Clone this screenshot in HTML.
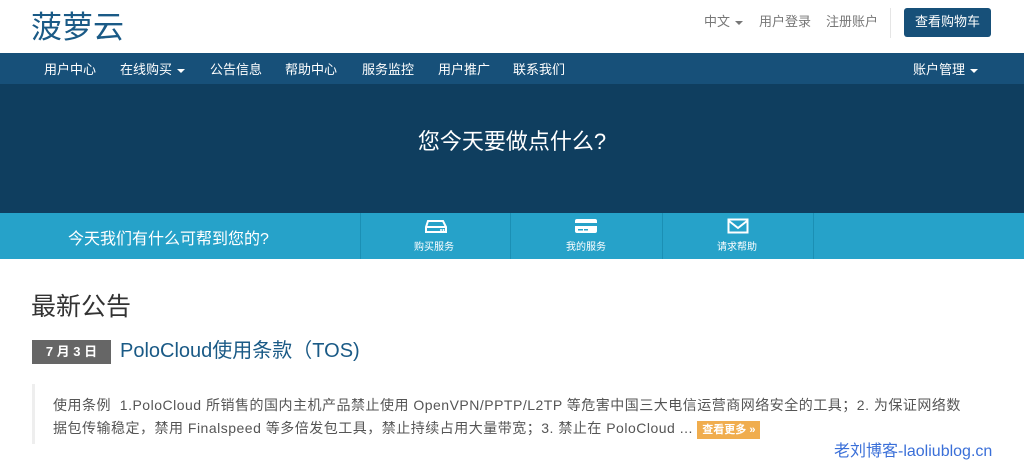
<!DOCTYPE html>
<html><head><meta charset="utf-8"><style>
*{margin:0;padding:0;box-sizing:border-box}
body{width:1024px;height:476px;overflow:hidden;background:#fff;font-family:"Liberation Sans","Noto Sans CJK SC",sans-serif;position:relative}
.abs{position:absolute;white-space:nowrap}
.caret{display:inline-block;border-left:4px solid transparent;border-right:4px solid transparent;border-top:4px solid currentColor;vertical-align:middle;margin-left:5px}
</style></head><body>
<div class="abs" style="left:31px;top:2px;font-size:31px;color:#1a5a86">菠萝云</div>
<div class="abs" style="left:704px;top:11px;font-size:13px;color:#777">中文<span class="caret"></span></div>
<div class="abs" style="left:759px;top:11px;font-size:13px;color:#777">用户登录</div>
<div class="abs" style="left:826px;top:11px;font-size:13px;color:#777">注册账户</div>
<div class="abs" style="left:890px;top:8px;width:1px;height:30px;background:#e5e5e5"></div>
<div class="abs" style="left:904px;top:8px;width:87px;height:29px;background:#175079;border-radius:3px;color:#fff;font-size:13px;line-height:27px;text-align:center">查看购物车</div>
<div class="abs" style="left:0;top:53px;width:1024px;height:32px;background:#175079"></div>
<div class="abs" style="left:0;top:84px;width:1024px;height:129px;background:#0f3e5f"></div>
<div class="abs" style="left:44px;top:59px;font-size:13px;color:#fff">用户中心</div>
<div class="abs" style="left:120px;top:59px;font-size:13px;color:#fff">在线购买<span class="caret"></span></div>
<div class="abs" style="left:210px;top:59px;font-size:13px;color:#fff">公告信息</div>
<div class="abs" style="left:285px;top:59px;font-size:13px;color:#fff">帮助中心</div>
<div class="abs" style="left:362px;top:59px;font-size:13px;color:#fff">服务监控</div>
<div class="abs" style="left:438px;top:59px;font-size:13px;color:#fff">用户推广</div>
<div class="abs" style="left:513px;top:59px;font-size:13px;color:#fff">联系我们</div>
<div class="abs" style="left:913px;top:59px;font-size:13px;color:#fff">账户管理<span class="caret"></span></div>
<div class="abs" style="left:0;top:124px;width:1024px;text-align:center;font-size:22px;color:#fff">您今天要做点什么?</div>
<div class="abs" style="left:0;top:213px;width:1024px;height:46px;background:#26a2c9"></div>
<div class="abs" style="left:68px;top:225px;font-size:16px;color:#fff">今天我们有什么可帮到您的?</div>
<div class="abs" style="left:360px;top:213px;width:1px;height:46px;background:#1b8fb4"></div>
<div class="abs" style="left:510px;top:213px;width:1px;height:46px;background:#1b8fb4"></div>
<div class="abs" style="left:662px;top:213px;width:1px;height:46px;background:#1b8fb4"></div>
<div class="abs" style="left:813px;top:213px;width:1px;height:46px;background:#1b8fb4"></div>
<svg class="abs" style="left:424px;top:218px" width="24" height="16"><path d="M4 3h15l3 6v5H2V9z M2 9h20" fill="none" stroke="#fff" stroke-width="2"/><circle cx="17" cy="12" r="1" fill="#fff"/><circle cx="19.5" cy="12" r="1" fill="#fff"/></svg>
<div class="abs" style="left:414px;top:238px;font-size:10px;color:#fff">购买服务</div>
<svg class="abs" style="left:574px;top:218px" width="24" height="16"><rect x="1" y="1" width="22" height="14" rx="2" fill="#fff"/><rect x="1" y="5" width="22" height="3" fill="#26a2c9"/><rect x="4" y="11" width="5" height="1.5" fill="#26a2c9"/><rect x="10" y="11" width="4" height="1.5" fill="#26a2c9"/></svg>
<div class="abs" style="left:566px;top:238px;font-size:10px;color:#fff">我的服务</div>
<svg class="abs" style="left:727px;top:218px" width="22" height="16"><rect x="1.5" y="1.5" width="19" height="13" fill="none" stroke="#fff" stroke-width="2"/><path d="M2 3l9 7 9-7" fill="none" stroke="#fff" stroke-width="2"/></svg>
<div class="abs" style="left:717px;top:238px;font-size:10px;color:#fff">请求帮助</div>
<div class="abs" style="left:31px;top:287px;font-size:25px;color:#333">最新公告</div>
<div class="abs" style="left:32px;top:340px;width:79px;height:24px;background:#666;color:#fff;font-size:13px;font-weight:bold;line-height:24px;text-align:center">7 月 3 日</div>
<div class="abs" style="left:120px;top:334px;font-size:20px;color:#1a5a86">PoloCloud使用条款（TOS)</div>
<div class="abs" style="left:32px;top:384px;width:3px;height:60px;background:#eee"></div>
<div class="abs" style="left:53px;top:394px;font-size:14px;color:#555;line-height:23px;letter-spacing:0.5px">使用条例 &nbsp;1.PoloCloud 所销售的国内主机产品禁止使用 OpenVPN/PPTP/L2TP 等危害中国三大电信运营商网络安全的工具；2. 为保证网络数<br>据包传输稳定，禁用 Finalspeed 等多倍发包工具，禁止持续占用大量带宽；3. 禁止在 PoloCloud ... <span style="background:#f0ad4e;color:#fff;font-size:11px;font-weight:bold;padding:3px 5px;letter-spacing:0">查看更多 »</span></div>
<div class="abs" style="left:834px;top:437px;font-size:16px;color:#3a6fd8">老刘博客-laoliublog.cn</div>
</body></html>
